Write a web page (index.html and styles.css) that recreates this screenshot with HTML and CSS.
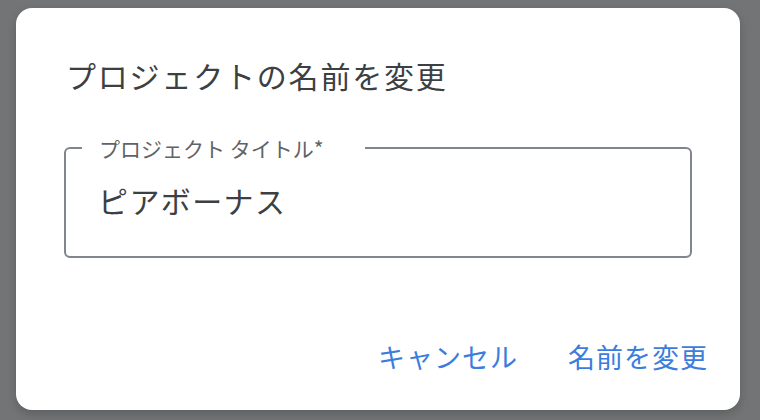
FILE: index.html
```html
<!DOCTYPE html>
<html lang="ja">
<head>
  <meta charset="UTF-8" />
  <meta name="viewport" content="width=device-width, initial-scale=1" />
  <title>プロジェクトの名前を変更</title>
  <link rel="stylesheet" href="styles.css">
</head>
<body>

<div class="dialog">
  <h2 class="dialog-title">プロジェクトの名前を変更</h2>

  <fieldset class="outlined-field">
    <legend class="field-label">プロジェクト タイトル*</legend>
    <div class="field-value">ピアボーナス</div>
  </fieldset>

  <div class="dialog-actions">
    <button class="text-btn">キャンセル</button>
    <button class="text-btn">名前を変更</button>
  </div>
</div>

</body>
</html>
```

FILE: styles.css
```css
body {
  font-family: "Noto Sans CJK JP", "Noto Sans", sans-serif;
  background: #737475;
  margin: 0;
  padding: 8px 20px 0 16px;
  height: 420px;
  box-sizing: border-box;
  overflow: hidden;
}

.dialog {
  background: #fff;
  border-radius: 16px;
  padding: 47px 48px 35px 48px;
  box-shadow: 0 4px 10px rgba(0, 0, 0, 0.18);
}

.dialog-title {
  margin: 0;
  padding-left: 2px;
  font-size: 30px;
  font-weight: 400;
  line-height: 40px;
  letter-spacing: 1.8px;
  color: #3c4043;
}

/* outlined text field, notch made by the legend */
.outlined-field {
  margin: 41px 0 0;
  padding: 0;
  border: 2px solid #80868b;
  border-radius: 6px;
}

.field-label {
  margin-left: 16px;
  padding: 0 41px 0 17px;
  font-size: 21px;
  line-height: 24px;
  color: #5f6368;
}

.field-value {
  padding: 20px 32px 36px;
  font-size: 30px;
  line-height: 40px;
  letter-spacing: 1.4px;
  color: #3c4043;
}

.dialog-actions {
  display: flex;
  justify-content: flex-end;
  gap: 34px;
  margin: 81px -24px 0 0;
}

.text-btn {
  font-family: inherit;
  font-size: 27px;
  line-height: 36px;
  letter-spacing: 1px;
  padding: 0 8px;
  border: none;
  background: none;
  color: #3b7ddd;
  cursor: pointer;
}
```
